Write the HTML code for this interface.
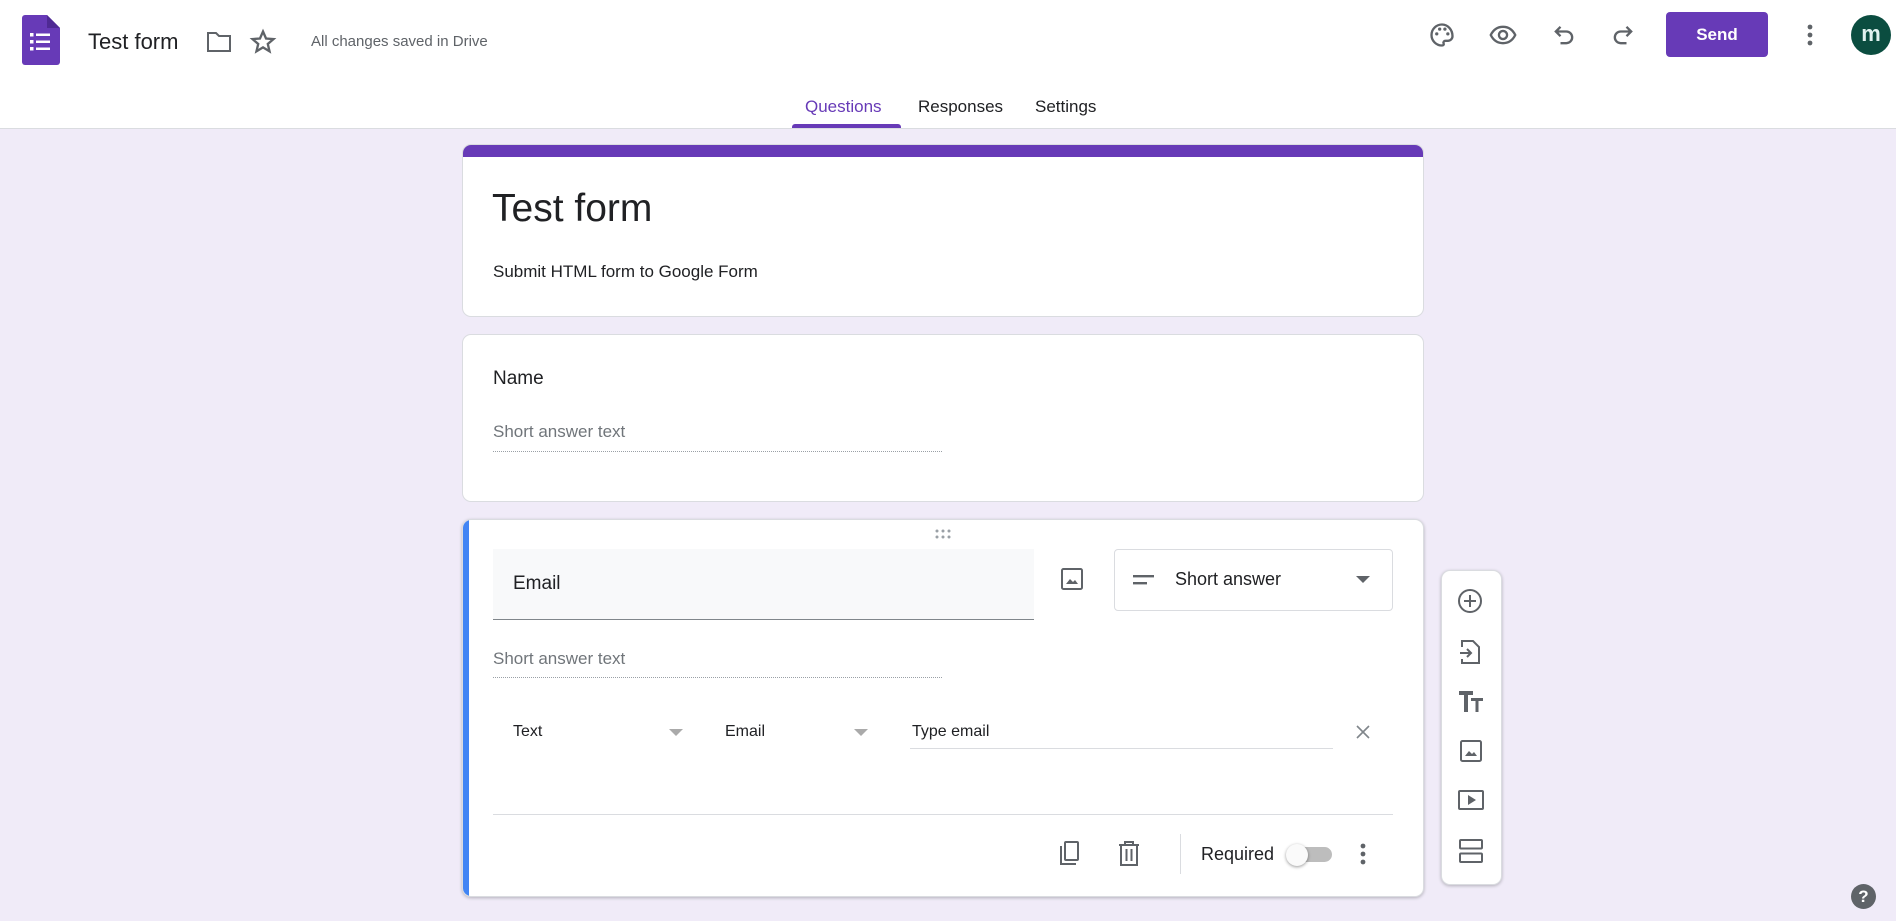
<!DOCTYPE html>
<html><head><meta charset="utf-8"><style>
*{box-sizing:border-box;margin:0;padding:0}
body{width:1896px;height:921px;overflow:hidden;background:#f0ebf8;font-family:"Liberation Sans",Arial,sans-serif;color:#202124;position:relative}
.a{position:absolute}
.hdr{left:0;top:0;width:1896px;height:129px;background:#fff;border-bottom:1px solid #dadce0}
.card{background:#fff;border:1px solid #dadce0;border-radius:9px}
svg{display:block}
.ic{fill:none;stroke:#5f6368;stroke-width:2}
.t{white-space:nowrap}
</style></head><body>
<div class="a hdr"></div>
<svg class="a" style="left:22px;top:15px" width="38" height="50" viewBox="0 0 38 50"><path d="M3 0H25L38 13V47a3 3 0 0 1-3 3H3a3 3 0 0 1-3-3V3a3 3 0 0 1 3-3z" fill="#673ab7"/><path d="M25 0V13H38z" fill="#4f2a94"/><g fill="#fff"><rect x="8" y="18" width="3.5" height="3.5"/><rect x="8" y="25" width="3.5" height="3.5"/><rect x="8" y="32" width="3.5" height="3.5"/><rect x="14" y="18.5" width="14" height="2.5"/><rect x="14" y="25.5" width="14" height="2.5"/><rect x="14" y="32.5" width="14" height="2.5"/></g></svg>
<div class="a t" style="left:88px;top:29px;font-size:22px">Test form</div>
<svg class="a" style="left:205px;top:29px" width="28" height="26" viewBox="0 0 28 26"><path d="M3 4h8l3 3h11v15H3z" class="ic" stroke-width="2.4"/></svg>
<svg class="a" style="left:249px;top:28px" width="28" height="28" viewBox="0 0 24 24"><path d="M12 3l2.6 6 6.4.5-4.9 4.2 1.5 6.3L12 16.6 6.4 20l1.5-6.3L3 9.5 9.4 9z" class="ic" stroke-width="1.8"/></svg>
<div class="a t" style="left:311px;top:33px;font-size:15px;color:#5f6368">All changes saved in Drive</div>
<svg class="a" style="left:1428px;top:21px" width="28" height="28" viewBox="0 0 24 24"><path d="M12 3a9 9 0 0 0 0 18c1.2 0 1.8-.8 1.4-1.8-.5-1.2.3-2.2 1.6-2.2H17a4 4 0 0 0 4-4c0-5.5-4-10-9-10z" class="ic"/><circle cx="7.5" cy="11" r="1.4" fill="#5f6368"/><circle cx="10" cy="7" r="1.4" fill="#5f6368"/><circle cx="14.5" cy="7" r="1.4" fill="#5f6368"/><circle cx="17" cy="11" r="1.4" fill="#5f6368"/></svg>
<svg class="a" style="left:1488px;top:21px" width="30" height="28" viewBox="0 0 24 24"><path d="M1.5 12C4 7 8 5 12 5s8 2 10.5 7c-2.5 5-6.5 7-10.5 7S4 17 1.5 12z" class="ic"/><circle cx="12" cy="12" r="3.5" class="ic"/></svg>
<svg class="a" style="left:1550px;top:21px" width="28" height="28" viewBox="0 0 24 24"><path d="M9 5L5 9l4 4M5 9h9a5 5 0 0 1 0 10H9" class="ic"/></svg>
<svg class="a" style="left:1609px;top:21px" width="28" height="28" viewBox="0 0 24 24"><path d="M15 5l4 4-4 4M19 9h-9a5 5 0 0 0 0 10h5" class="ic"/></svg>
<div class="a t" style="left:1666px;top:12px;width:102px;height:45px;background:#673ab7;border-radius:4px;color:#fff;font-weight:bold;font-size:17px;text-align:center;line-height:45px">Send</div>
<svg class="a" style="left:1800px;top:22px" width="20" height="26" viewBox="0 0 20 26"><circle cx="10" cy="5" r="2.4" fill="#5f6368"/><circle cx="10" cy="13" r="2.4" fill="#5f6368"/><circle cx="10" cy="21" r="2.4" fill="#5f6368"/></svg>
<div class="a t" style="left:1851px;top:15px;width:40px;height:40px;border-radius:50%;background:#0b4d40;color:#e0f2ef;font-weight:bold;font-size:22px;text-align:center;line-height:37px">m</div>
<div class="a t" style="left:805px;top:97px;font-size:17px;color:#673ab7">Questions</div>
<div class="a" style="left:792px;top:124px;width:109px;height:4px;background:#673ab7;border-radius:3px 3px 0 0"></div>
<div class="a t" style="left:918px;top:97px;font-size:17px;color:#202124">Responses</div>
<div class="a t" style="left:1035px;top:97px;font-size:17px;color:#202124">Settings</div>
<div class="a card" style="left:462px;top:144px;width:962px;height:173px;overflow:hidden"><div style="height:12px;background:#673ab7"></div></div>
<div class="a t" style="left:492px;top:187px;font-size:39px">Test form</div>
<div class="a t" style="left:493px;top:262px;font-size:17px">Submit HTML form to Google Form</div>
<div class="a card" style="left:462px;top:334px;width:962px;height:168px"></div>
<div class="a t" style="left:493px;top:368px;font-size:19px">Name</div>
<div class="a t" style="left:493px;top:422px;font-size:17px;color:#70757a">Short answer text</div>
<div class="a" style="left:493px;top:451px;width:449px;border-top:1px dotted #9aa0a6"></div>
<div class="a card" style="left:462px;top:519px;width:962px;height:378px;box-shadow:0 1px 3px rgba(0,0,0,.25);overflow:hidden"><div style="position:absolute;left:0;top:0;width:6px;height:100%;background:#4285f4"></div></div>
<svg class="a" style="left:934px;top:528px" width="20" height="12" viewBox="0 0 20 12"><g fill="#9aa0a6"><circle cx="3" cy="3" r="1.5"/><circle cx="9" cy="3" r="1.5"/><circle cx="15" cy="3" r="1.5"/><circle cx="3" cy="9" r="1.5"/><circle cx="9" cy="9" r="1.5"/><circle cx="15" cy="9" r="1.5"/></g></svg>
<div class="a" style="left:493px;top:549px;width:541px;height:71px;background:#f8f9fa;border-bottom:1px solid #80868b"></div>
<div class="a t" style="left:513px;top:573px;font-size:19px">Email</div>
<svg class="a" style="left:1060px;top:567px" width="24" height="24" viewBox="0 0 24 24"><rect x="2" y="2" width="20" height="20" rx="1.5" class="ic"/><path d="M6 17l4-5 3 3 2-2 3 4z" fill="#5f6368"/></svg>
<div class="a" style="left:1114px;top:549px;width:279px;height:62px;border:1px solid #dadce0;border-radius:4px"></div>
<svg class="a" style="left:1133px;top:573px" width="22" height="14" viewBox="0 0 22 14"><rect x="0" y="2" width="21" height="2.4" fill="#5f6368"/><rect x="0" y="9" width="14" height="2.4" fill="#5f6368"/></svg>
<div class="a t" style="left:1175px;top:569px;font-size:18px">Short answer</div>
<svg class="a" style="left:1356px;top:576px" width="14" height="8" viewBox="0 0 14 8"><path d="M0 0h14L7 7z" fill="#5f6368"/></svg>
<div class="a t" style="left:493px;top:649px;font-size:17px;color:#70757a">Short answer text</div>
<div class="a" style="left:493px;top:677px;width:449px;border-top:1px dotted #9aa0a6"></div>
<div class="a t" style="left:513px;top:723px;font-size:16px">Text</div>
<svg class="a" style="left:669px;top:729px" width="14" height="8" viewBox="0 0 14 8"><path d="M0 0h14L7 7z" fill="#aaa"/></svg>
<div class="a t" style="left:725px;top:723px;font-size:16px">Email</div>
<svg class="a" style="left:854px;top:729px" width="14" height="8" viewBox="0 0 14 8"><path d="M0 0h14L7 7z" fill="#aaa"/></svg>
<div class="a t" style="left:912px;top:723px;font-size:16px">Type email</div>
<div class="a" style="left:910px;top:748px;width:423px;border-top:1px solid #dadce0"></div>
<svg class="a" style="left:1355px;top:724px" width="16" height="16" viewBox="0 0 16 16"><path d="M2 2l12 12M14 2L2 14" stroke="#80868b" stroke-width="1.6"/></svg>
<div class="a" style="left:493px;top:814px;width:900px;border-top:1px solid #dadce0"></div>
<svg class="a" style="left:1056px;top:840px" width="26" height="28" viewBox="0 0 26 28"><path d="M5 6v18h15" class="ic" stroke-width="2.4"/><rect x="9" y="2" width="13" height="18" rx="1" class="ic" stroke-width="2.4"/></svg>
<svg class="a" style="left:1117px;top:840px" width="24" height="28" viewBox="0 0 24 28"><path d="M2 5h20M8 5V2h8v3M4 5v20h16V5M9.5 9v12M14.5 9v12" class="ic" stroke-width="2.4"/></svg>
<div class="a" style="left:1180px;top:834px;height:40px;border-left:1px solid #dadce0"></div>
<div class="a t" style="left:1201px;top:844px;font-size:18px">Required</div>
<div class="a" style="left:1290px;top:847px;width:42px;height:15px;border-radius:8px;background:#bdbdbd"></div>
<div class="a" style="left:1286px;top:844px;width:22px;height:22px;border-radius:50%;background:#fafafa;box-shadow:0 1px 3px rgba(0,0,0,.4)"></div>
<svg class="a" style="left:1355px;top:841px" width="16" height="26" viewBox="0 0 16 26"><circle cx="8" cy="5" r="2.4" fill="#5f6368"/><circle cx="8" cy="13" r="2.4" fill="#5f6368"/><circle cx="8" cy="21" r="2.4" fill="#5f6368"/></svg>
<div class="a card" style="left:1441px;top:570px;width:61px;height:315px;box-shadow:0 1px 3px rgba(0,0,0,.25)"></div>
<svg class="a" style="left:1457px;top:588px" width="26" height="26" viewBox="0 0 26 26"><circle cx="13" cy="13" r="11" class="ic" stroke-width="2.2"/><path d="M13 7v12M7 13h12" class="ic" stroke-width="2.2"/></svg>
<svg class="a" style="left:1459px;top:638px" width="22" height="28" viewBox="0 0 22 28"><path d="M3 9V3h11l6 6v16H3v-4M3 16v-1" class="ic" stroke-width="2.4"/><path d="M1 15h10M8 11l4 4-4 4" class="ic" stroke-width="2.2"/></svg>
<svg class="a" style="left:1458px;top:689px" width="26" height="24" viewBox="0 0 26 24"><path d="M1 2h14v4H10v17H6V6H1zM13 9h12v3h-4.5v11h-3V12H13z" fill="#5f6368"/></svg>
<svg class="a" style="left:1459px;top:739px" width="24" height="24" viewBox="0 0 24 24"><rect x="2" y="2" width="20" height="20" rx="1.5" class="ic" stroke-width="2.2"/><path d="M6 17l4-5 3 3 2-2 3 4z" fill="#5f6368"/></svg>
<svg class="a" style="left:1457px;top:789px" width="28" height="22" viewBox="0 0 28 22"><rect x="2" y="2" width="24" height="18" rx="1" class="ic" stroke-width="2.4"/><path d="M11 6v10l8-5z" fill="#5f6368"/></svg>
<svg class="a" style="left:1458px;top:838px" width="26" height="26" viewBox="0 0 26 26"><rect x="2" y="2" width="22" height="8.5" rx="1" class="ic" stroke-width="2.4"/><rect x="2" y="15.5" width="22" height="8.5" rx="1" class="ic" stroke-width="2.4"/></svg>
<div class="a t" style="left:1851px;top:884px;width:25px;height:25px;border-radius:50%;background:#5f6368;color:#fff;font-weight:bold;font-size:17px;text-align:center;line-height:25px">?</div>
</body></html>
